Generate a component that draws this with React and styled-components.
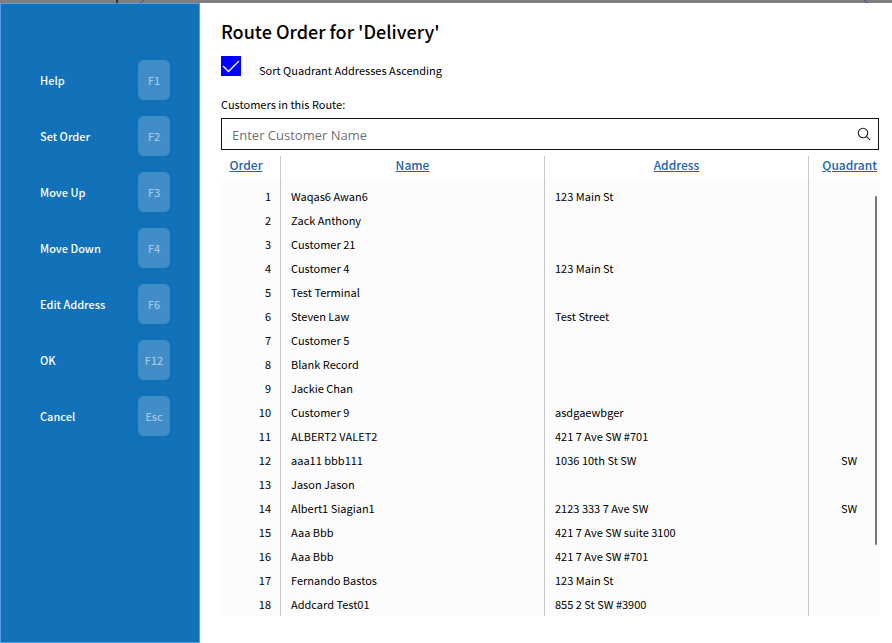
import React, { useState } from "react";
import styled, { createGlobalStyle } from "styled-components";

const GlobalStyle = createGlobalStyle`
  *, *::before, *::after { box-sizing: border-box; }
  body {
    margin: 0;
    background: #fff;
    color: #000;
    font-family: "Noto Sans CJK SC", "Noto Sans", sans-serif;
    font-size: 11px;
    font-weight: 400;
    line-height: 16px;
  }
  button, input { font: inherit; color: inherit; }
`;

const Page = styled.div`
  display: flex;
  flex-direction: column;
  height: 100vh;
`;

const Backdrop = styled.svg`
  display: block;
  flex: none;
  width: 100%;
  height: 3px;
  background: #7f7f7f;
`;

const Dialog = styled.div`
  display: flex;
  flex: 1;
  min-height: 0;
`;

const Sidebar = styled.nav`
  display: flex;
  flex: none;
  flex-direction: column;
  gap: 16px;
  width: 200px;
  padding: 56px 29px 0 39px;
  background: #1171b9;
  border: 1px solid #5b9be3;
`;

const Command = styled.button`
  display: flex;
  align-items: center;
  justify-content: space-between;
  height: 40px;
  padding: 0;
  border: 0;
  background: none;
  color: #fff;
  font-weight: 500;
  text-align: left;
  cursor: pointer;
`;

const Key = styled.kbd`
  display: grid;
  place-items: center;
  width: 32px;
  height: 40px;
  border-radius: 6px;
  background: #418dc7;
  color: #b3d1e9;
  font: inherit;
  font-weight: 400;
`;

const Main = styled.main`
  display: flex;
  flex: 1;
  flex-direction: column;
  min-width: 0;
  padding: 12px 13px 27px 21px;
`;

const Title = styled.h1`
  margin: 0;
  font-size: 18px;
  font-weight: 500;
  line-height: 32px;
`;

const SortOption = styled.div`
  display: flex;
  align-items: flex-start;
  gap: 18px;
  height: 24px;
  margin-top: 9px;
`;

const CheckWrap = styled.span`
  display: grid;
  width: 20px;
  height: 20px;

  > * { grid-area: 1 / 1; }
`;

const CheckInput = styled.input`
  width: 20px;
  height: 20px;
  margin: 0;
  appearance: none;
  background: #fff;
  border: 1px solid #00f;

  &:checked { background: #00f; }
`;

const CheckMark = styled.svg`
  width: 20px;
  height: 20px;
  fill: none;
  stroke: #fff;
  stroke-width: 1.3;
  pointer-events: none;
`;

const SortLabel = styled.label`
  align-self: flex-end;
  line-height: 20px;
`;

const FieldLabel = styled.label`
  margin-top: 14px;
  line-height: 20px;
`;

const SearchBox = styled.div`
  display: flex;
  flex: none;
  align-items: center;
  height: 32px;
  margin-top: 4px;
  padding: 0 7px 0 10px;
  border: 1px solid #111;
`;

const SearchInput = styled.input`
  flex: 1;
  min-width: 0;
  padding: 2px 0 0;
  border: 0;
  outline: 0;
  background: none;
  font-family: "Open Sans", "Noto Sans", sans-serif;
  font-size: 13px;
  font-weight: 400;
  line-height: 20px;

  &::placeholder { color: #707070; opacity: 1; }
`;

const SearchButton = styled.button`
  display: flex;
  padding: 0;
  border: 0;
  background: none;
  cursor: pointer;

  svg {
    width: 14px;
    height: 14px;
    fill: none;
    stroke: #222;
    stroke-width: 1.1;
  }
`;

const TableArea = styled.div`
  position: relative;
  flex: 1;
  min-height: 0;
  margin-top: 6px;
  overflow: hidden;
`;

const Table = styled.table`
  width: 100%;
  table-layout: fixed;
  border-collapse: separate;
  border-spacing: 0;
`;

const Col = styled.col`
  width: ${(p) => p.$width || "auto"};
`;

const HeaderCell = styled.th`
  height: 24px;
  padding: ${(p) => (p.$first ? "0 9px 0 0" : p.$last ? "0 2px 0 0" : "0")};
  border-right: ${(p) => (p.$last ? "0" : "1px solid #c8c8c8")};
  vertical-align: top;
  font-weight: 500;
`;

const SortButton = styled.button`
  display: block;
  margin: 0 auto;
  margin-right: ${(p) => (p.$end ? "0" : "auto")};
  padding: 0;
  border: 0;
  background: none;
  color: #2065ab;
  font-size: 12px;
  line-height: 18px;
  text-decoration: underline;
  cursor: pointer;
`;

const Body = styled.tbody`
  background: #fcfcfc;

  tr:first-child td {
    height: 29px;
    padding-top: 5px;
  }
`;

const Cell = styled.td`
  height: 24px;
  padding: ${(p) => (p.$last ? "0 0 2px 10px" : "0 9px 2px 10px")};
  border-right: ${(p) => (p.$last ? "0" : "1px solid #c8c8c8")};
  text-align: ${(p) => p.$align || "left"};
  white-space: nowrap;
  overflow: hidden;
`;

const ScrollThumb = styled.span`
  position: absolute;
  top: 40px;
  right: 2px;
  width: 2px;
  height: 80%;
  max-height: 349px;
  border-radius: 1px;
  background: #767676;
`;

const commands = [
  ["Help", "F1"],
  ["Set Order", "F2"],
  ["Move Up", "F3"],
  ["Move Down", "F4"],
  ["Edit Address", "F6"],
  ["OK", "F12"],
  ["Cancel", "Esc"],
];

const customers = [
  ["Waqas6 Awan6", "123 Main St", ""],
  ["Zack Anthony", "", ""],
  ["Customer 21", "", ""],
  ["Customer 4", "123 Main St", ""],
  ["Test Terminal", "", ""],
  ["Steven Law", "Test Street", ""],
  ["Customer 5", "", ""],
  ["Blank Record", "", ""],
  ["Jackie Chan", "", ""],
  ["Customer 9", "asdgaewbger", ""],
  ["ALBERT2 VALET2", "421 7 Ave SW #701", ""],
  ["aaa11 bbb111", "1036 10th St SW", "SW"],
  ["Jason Jason", "", ""],
  ["Albert1 Siagian1", "2123 333 7 Ave SW", "SW"],
  ["Aaa Bbb", "421 7 Ave SW suite 3100", ""],
  ["Aaa Bbb", "421 7 Ave SW #701", ""],
  ["Fernando Bastos", "123 Main St", ""],
  ["Addcard Test01", "855 2 St SW #3900", ""],
];

export default function App() {
  const [ascending, setAscending] = useState(true);

  return (
    <Page>
      <GlobalStyle />
      <Backdrop aria-hidden="true">
        <path d="M117 0V3" stroke="#333" strokeWidth="2" />
        <path d="M144 0L140 3M864 0L868 3" stroke="#41548c" />
      </Backdrop>
      <Dialog role="dialog" aria-labelledby="title">
        <Sidebar>
          {commands.map(([label, key]) => (
            <Command key={key} type="button">
              {label}
              <Key>{key}</Key>
            </Command>
          ))}
        </Sidebar>
        <Main>
          <Title id="title">Route Order for 'Delivery'</Title>
          <SortOption>
            <CheckWrap>
              <CheckInput
                id="sort"
                type="checkbox"
                checked={ascending}
                onChange={(e) => setAscending(e.target.checked)}
              />
              <CheckMark viewBox="0 0 20 20" aria-hidden="true">
                <path d="M2 10L7.5 15.5L18 5" />
              </CheckMark>
            </CheckWrap>
            <SortLabel htmlFor="sort">Sort Quadrant Addresses Ascending</SortLabel>
          </SortOption>
          <FieldLabel htmlFor="customer">Customers in this Route:</FieldLabel>
          <SearchBox>
            <SearchInput id="customer" type="text" placeholder="Enter Customer Name" />
            <SearchButton type="button" aria-label="Search">
              <svg viewBox="0 0 14 14" aria-hidden="true">
                <circle cx="6" cy="6" r="4.7" />
                <path d="M9.4 9.4L13.2 13.2" />
              </svg>
            </SearchButton>
          </SearchBox>
          <TableArea>
            <Table>
              <colgroup>
                <Col $width="60px" />
                <Col />
                <Col />
                <Col $width="70px" />
              </colgroup>
              <thead>
                <tr>
                  <HeaderCell $first><SortButton type="button">Order</SortButton></HeaderCell>
                  <HeaderCell><SortButton type="button">Name</SortButton></HeaderCell>
                  <HeaderCell><SortButton type="button">Address</SortButton></HeaderCell>
                  <HeaderCell $last><SortButton type="button" $end>Quadrant</SortButton></HeaderCell>
                </tr>
              </thead>
              <Body>
                {customers.map(([name, address, quadrant], i) => (
                  <tr key={i}>
                    <Cell $align="right">{i + 1}</Cell>
                    <Cell>{name}</Cell>
                    <Cell>{address}</Cell>
                    <Cell $last $align="center">{quadrant}</Cell>
                  </tr>
                ))}
              </Body>
            </Table>
            <ScrollThumb />
          </TableArea>
        </Main>
      </Dialog>
    </Page>
  );
}
